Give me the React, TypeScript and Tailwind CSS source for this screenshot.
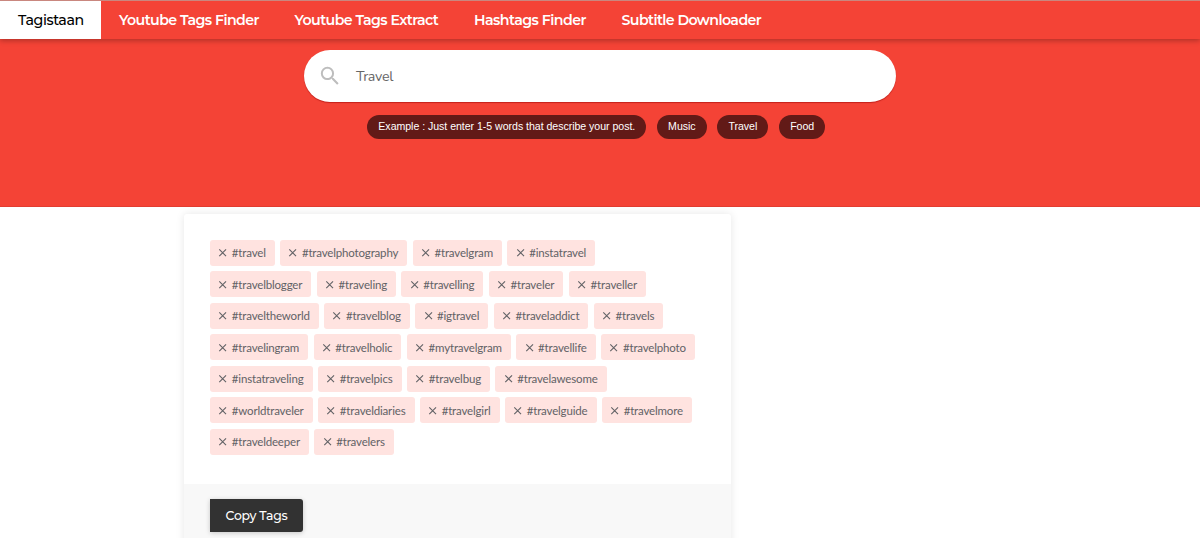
import React from 'react';

const nav = [
  { label: 'Tagistaan', cls: 'w-[101px] bg-white text-black font-medium tracking-[-0.42px]' },
  { label: 'Youtube Tags Finder', cls: 'w-[175.5px] text-white font-semibold tracking-[-0.57px]' },
  { label: 'Youtube Tags Extract', cls: 'w-[179.5px] text-white font-semibold tracking-[-0.57px]' },
  { label: 'Hashtags Finder', cls: 'w-[147.5px] text-white font-semibold tracking-[-0.54px]' },
  { label: 'Subtitle Downloader', cls: 'w-[176px] text-white font-semibold tracking-[-0.6px]' },
];

const rows = [
  ['travel', 'travelphotography', 'travelgram', 'instatravel'],
  ['travelblogger', 'traveling', 'travelling', 'traveler', 'traveller'],
  ['traveltheworld', 'travelblog', 'igtravel', 'traveladdict', 'travels'],
  ['travelingram', 'travelholic', 'mytravelgram', 'travellife', 'travelphoto'],
  ['instatraveling', 'travelpics', 'travelbug', 'travelawesome'],
  ['worldtraveler', 'traveldiaries', 'travelgirl', 'travelguide', 'travelmore'],
  ['traveldeeper', 'travelers'],
];

function Tag({ name }: { name: string }) {
  return (
    <span className="flex h-[26px] items-center rounded-[3px] bg-[#ffe3e0] pr-[9.1px] pl-[9.3px] whitespace-nowrap">
      <svg className="mr-[5px] h-[7.5px] w-[7.5px] shrink-0 overflow-visible" viewBox="0 0 8 8" fill="none" stroke="#626266" strokeWidth="1.2">
        <path d="M.3.4l7.2 7.2M7.5.4l-7.2 7.2" />
      </svg>
      #{name}
    </span>
  );
}

function Pill({ children }: { children: React.ReactNode }) {
  return (
    <span className="flex h-6 items-center rounded-full bg-[#621a17] px-[11.2px] whitespace-nowrap">
      {children}
    </span>
  );
}

export default function App() {
  return (
    <div className="h-[538px] w-full overflow-hidden bg-white">
      <header className="relative z-10 flex h-[39px] border-t border-[#c9877f] bg-[#f44336] font-[Montserrat,Inter,sans-serif] text-[14.2px] shadow-[0_2px_5px_rgba(0,0,0,0.26)]">
        {nav.map((n) => (
          <a key={n.label} className={`flex shrink-0 items-center pt-px pl-[18px] whitespace-nowrap ${n.cls}`}>
            {n.label}
          </a>
        ))}
      </header>

      <section className="flex h-[168px] flex-col items-center border-b border-[#e23d31] bg-[#f44336] pt-[11px]">
        <div className="flex h-[52px] w-[592px] items-center rounded-full bg-white pl-[15px] shadow-[0_1px_1px_rgba(150,0,0,0.5)]">
          <svg className="h-[22px] w-[22px] text-[#bdbdbd]" viewBox="1.2 1.2 21.6 21.6" fill="currentColor">
            <path d="M15.5 14h-.79l-.28-.27A6.47 6.47 0 0 0 16 9.5 6.5 6.5 0 1 0 9.5 16c1.61 0 3.09-.59 4.23-1.57l.27.28v.79l5 4.99L20.49 19l-4.99-5zm-6 0C7.01 14 5 11.99 5 9.5S7.01 5 9.5 5 14 7.01 14 9.5 11.99 14 9.5 14z" />
          </svg>
          <span className="ml-[15px] pt-0.5 font-[Nunito,'Open_Sans',sans-serif] text-[14.2px] tracking-[-0.3px] text-[#666]">Travel</span>
        </div>
        <div className="mt-[13px] mr-[7.5px] flex gap-[10.5px] font-['Liberation_Sans',Arial,sans-serif] text-[10.6px] tracking-[-0.04px] text-white">
          <Pill>Example : Just enter 1-5 words that describe your post.</Pill>
          <Pill>Music</Pill>
          <Pill>Travel</Pill>
          <Pill>Food</Pill>
        </div>
      </section>

      <main className="mt-[7px] ml-[184px] w-[547px] rounded-[3px] bg-white shadow-[0_0_8px_rgba(0,0,0,0.1)]">
        <div className="flex h-[270px] flex-col gap-[5.48px] pt-[26px] pl-[26px] font-[Lato,sans-serif] text-[11.5px] tracking-[-0.165px] text-[#626266]">
          {rows.map((row) => (
            <div key={row[0]} className="flex gap-[5.3px]">
              {row.map((t) => (
                <Tag key={t} name={t} />
              ))}
            </div>
          ))}
        </div>
        <footer className="h-20 bg-[#f8f8f8] pt-[15px] pl-[26px]">
          <button className="h-[33px] w-[93px] rounded-r-[3px] bg-[#323232] pt-0.5 font-[Montserrat,Inter,sans-serif] text-[12.4px] font-medium tracking-[-0.25px] text-white shadow-[0_1px_5px_rgba(0,0,0,0.2)]">
            Copy Tags
          </button>
        </footer>
      </main>
    </div>
  );
}
